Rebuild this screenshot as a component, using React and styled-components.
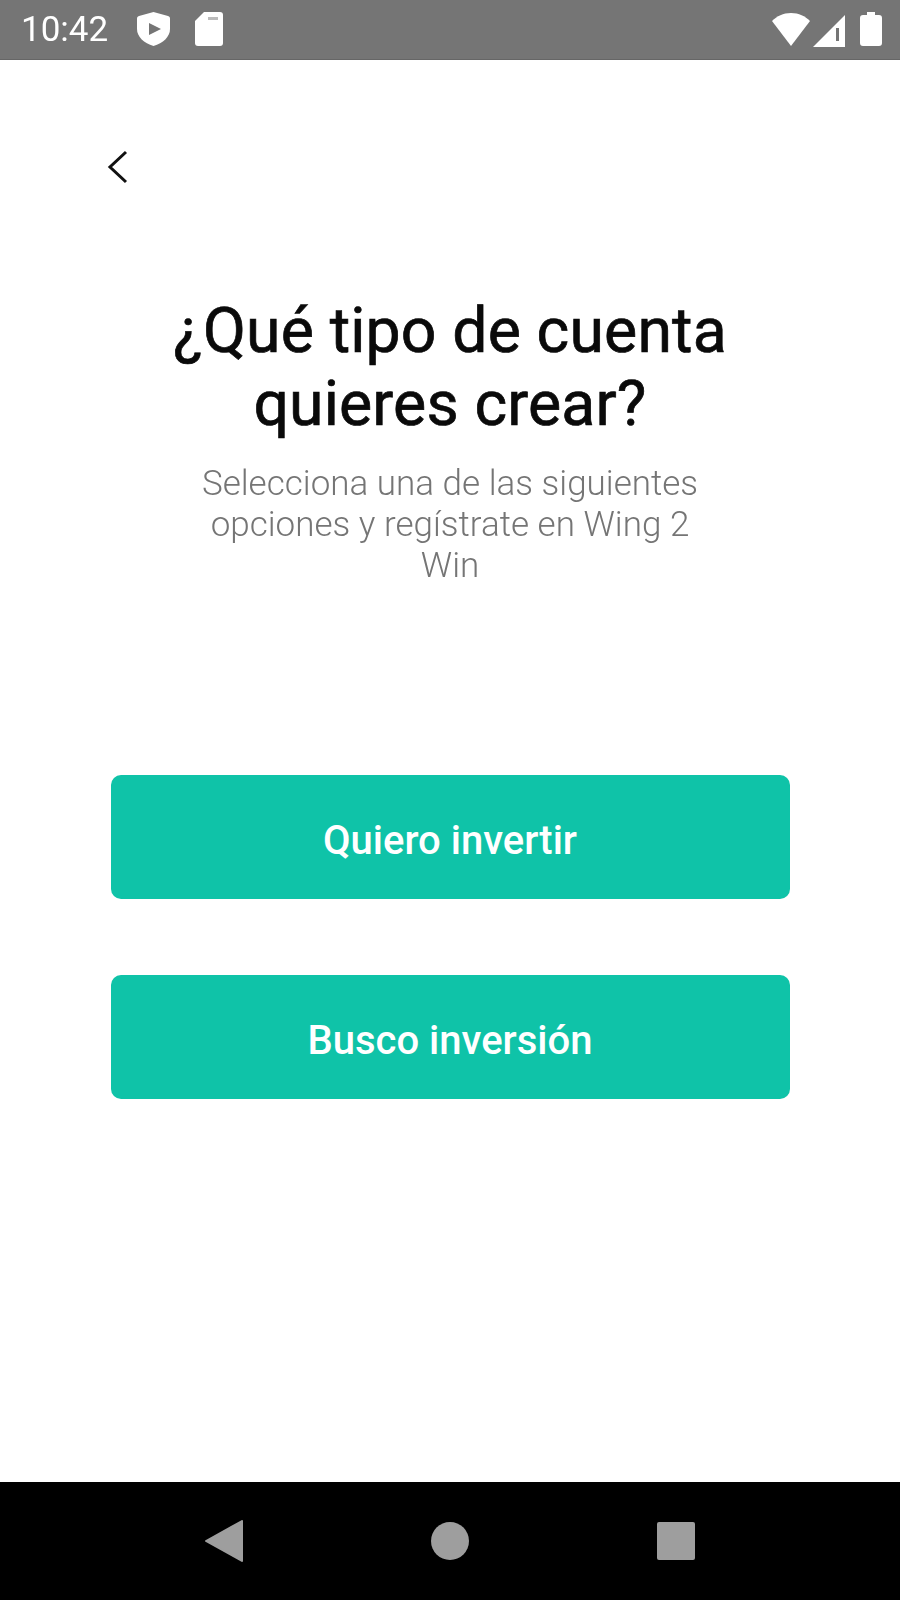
import React from 'react';
import styled, { createGlobalStyle, css } from 'styled-components';

const Global = createGlobalStyle`
  html, body { margin: 0; padding: 0; background: #fff; }
  * { box-sizing: border-box; }
`;

const soft = css`
  filter: blur(0.6px);
`;

const Screen = styled.div`
  width: 900px;
  height: 1600px;
  display: flex;
  flex-direction: column;
  font-family: Roboto, "Liberation Sans", sans-serif;
  background: #fff;
  overflow: hidden;
`;

const StatusBar = styled.header`
  height: 60px;
  flex: none;
  display: flex;
  align-items: center;
  justify-content: space-between;
  padding: 0 18px 1px 21px;
  background: #757575;
  border-bottom: 1px solid #666;
  color: #fff;
`;

const StatusGroup = styled.div`
  display: flex;
  align-items: center;
`;

const Clock = styled.span`
  ${soft}
  font-size: 35px;
  line-height: 1;
  margin-right: 29px;
`;

const Content = styled.main`
  flex: 1;
  display: flex;
  flex-direction: column;
  align-items: center;
`;

const BackRow = styled.div`
  align-self: stretch;
  height: 48px;
  margin-top: 83px;
  padding-left: 106px;
  display: flex;
  align-items: center;
`;

const Title = styled.h1`
  ${soft}
  margin: 103px 0 0;
  font-size: 62.5px;
  line-height: 73px;
  font-weight: 400;
  letter-spacing: 0.15px;
  -webkit-text-stroke: 0.7px #0a0a0a;
  color: #0a0a0a;
  text-align: center;
`;

const Subtitle = styled.p`
  ${soft}
  margin: 23px 0 0;
  width: 520px;
  font-size: 35px;
  line-height: 41px;
  font-weight: 300;
  color: #757575;
  text-align: center;
`;

const Actions = styled.div`
  margin-top: 189px;
  display: flex;
  flex-direction: column;
  gap: 76px;
`;

const ActionButton = styled.button`
  width: 679px;
  height: 124px;
  padding: 6px 0 0;
  border: 0;
  border-radius: 10px;
  background: #0fc3a8;
  color: #fff;
  font-family: inherit;
  font-size: 40px;
  font-weight: 500;
`;

const NavBar = styled.nav`
  height: 118px;
  flex: none;
  background: #000;
  display: flex;
  align-items: center;
  justify-content: center;
  gap: 188px;
`;

const Icon = styled.svg`
  ${soft}
  display: block;
  flex: none;
  margin-left: ${p => p.$left || 0}px;
  margin-top: ${p => p.$top || 0}px;
`;

export default function App() {
  return (
    <Screen>
      <Global />
      <StatusBar>
        <StatusGroup>
          <Clock>10:42</Clock>
          <Icon width="33" height="34" viewBox="0 0 33 34">
            <path fill="#fff" d="M16.5 0 31 4c1.500.500 2 1 2 3v10c0 8-7 14-16.500 17C7 31 0 25 0 17V7c0-2 .500-2.500 2-3z" />
            <path fill="#757575" d="M12 11l12 6-12 6z" />
          </Icon>
          <Icon $left={25} width="28" height="34" viewBox="0 0 28 34">
            <path fill="#fff" d="M9 0h16a3 3 0 0 1 3 3v28a3 3 0 0 1-3 3H3a3 3 0 0 1-3-3V9z" />
            <path fill="#bbb" d="M13 5h10v3H13z" />
          </Icon>
        </StatusGroup>
        <StatusGroup>
          <Icon width="38" height="33" viewBox="0 0 38 33">
            <path fill="#fff" d="M0 8C5 3 11 0 19 0s14 3 19 8L19 33z" />
          </Icon>
          <Icon $left={3} $top={3} width="32" height="32" viewBox="0 0 32 32">
            <path fill="#fff" d="M0 32 32 0v32z" />
            <path fill="#757575" d="M23 13h3v13h-3z" />
          </Icon>
          <Icon $left={15} width="22" height="34" viewBox="0 0 22 34">
            <path fill="#fff" d="M7 0h8v3h4a3 3 0 0 1 3 3v25a3 3 0 0 1-3 3H3a3 3 0 0 1-3-3V6a3 3 0 0 1 3-3h4z" />
          </Icon>
        </StatusGroup>
      </StatusBar>
      <Content>
        <BackRow>
          <Icon width="24" height="36" viewBox="0 0 24 36">
            <path fill="none" stroke="#111" strokeWidth="3" d="M20 3 4 18l16 15" />
          </Icon>
        </BackRow>
        <Title>¿Qué tipo de cuenta<br />quieres crear?</Title>
        <Subtitle>Selecciona una de las siguientes opciones y regístrate en Wing 2 Win</Subtitle>
        <Actions>
          <ActionButton>Quiero invertir</ActionButton>
          <ActionButton>Busco inversión</ActionButton>
        </Actions>
      </Content>
      <NavBar>
        <Icon width="38" height="42" viewBox="0 0 38 42">
          <path fill="#9e9e9e" stroke="#9e9e9e" strokeWidth="2" strokeLinejoin="round" d="M37 1v40L1 21z" />
        </Icon>
        <Icon width="38" height="38" viewBox="0 0 38 38">
          <circle cx="19" cy="19" r="19" fill="#9e9e9e" />
        </Icon>
        <Icon width="38" height="38" viewBox="0 0 38 38">
          <rect width="38" height="38" rx="2" fill="#9e9e9e" />
        </Icon>
      </NavBar>
    </Screen>
  );
}
